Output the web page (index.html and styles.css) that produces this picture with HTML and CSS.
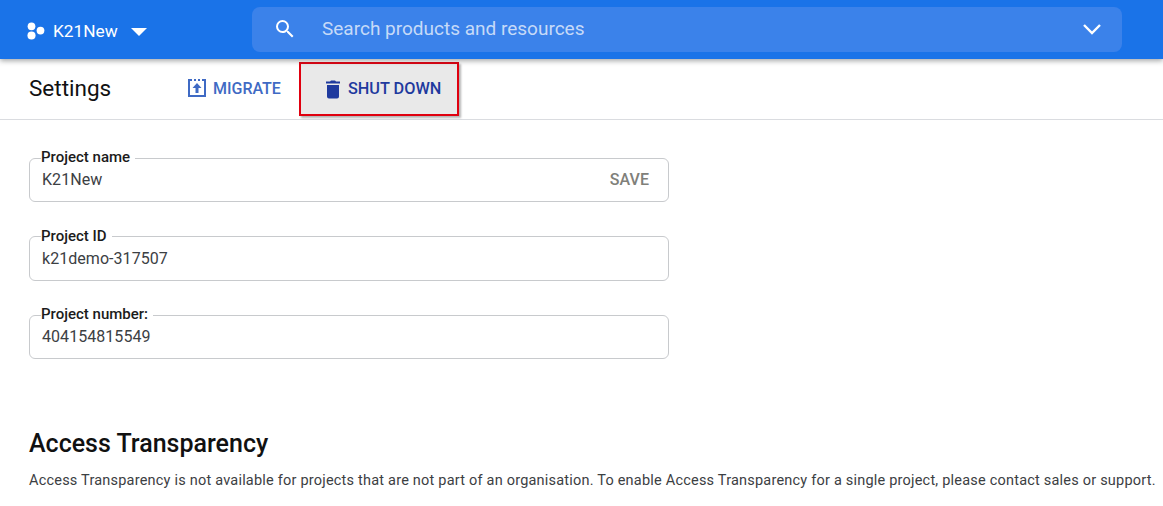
FILE: index.html
```html
<!DOCTYPE html>
<html lang="en">
<head>
<meta charset="utf-8">
<title>Settings</title>
<link rel="stylesheet" href="styles.css">
</head>
<body>
<header class="topbar">
  <div class="project-picker">
    <svg class="dots" width="20" height="20" viewBox="0 0 20 20"><circle cx="5" cy="4.800" r="4.300"/><circle cx="15" cy="9.500" r="4.300"/><circle cx="5" cy="15" r="4.500"/></svg>
    <span class="project-label">K21New</span>
    <span class="caret"></span>
  </div>
  <div class="search">
    <svg class="search-icon" width="24" height="24" viewBox="0 0 24 24"><path fill="#fff" d="M15.500 14h-.79l-.28-.27A6.470 6.470 0 0 0 16 9.500 6.500 6.500 0 1 0 9.500 16c1.610 0 3.090-.59 4.230-1.570l.27.28v.79l5 4.990L20.490 19l-4.990-5zm-6 0C7.010 14 5 11.990 5 9.500S7.010 5 9.500 5 14 7.010 14 9.500 11.990 14 9.500 14z"/></svg>
    <span class="search-text">Search products and resources</span>
    <svg class="chevron" width="20" height="12" viewBox="0 0 20 12"><path d="M2 2l8 8 8-8" fill="none" stroke="#fff" stroke-width="2.400"/></svg>
  </div>
</header>
<section class="toolbar">
  <h1 class="page-title">Settings</h1>
  <button class="action migrate">
    <svg width="20" height="20" viewBox="0 0 20 20"><path fill="none" stroke="#3f6ac4" stroke-width="2" d="M5 2H2v16h16V2h-3"/><path fill="#3f6ac4" d="M7 1h2v2H7zM11 1h2v2h-2zM10 5l4.500 5H11.500v5h-3v-5H5.500z"/></svg>
    <span>MIGRATE</span>
  </button>
  <button class="action shutdown">
    <svg width="16" height="20" viewBox="0 0 16 20"><path fill="#1f3a9e" d="M2 6h12v11.500a2 2 0 0 1-2 2H4a2 2 0 0 1-2-2zM1 2.500h4L6 1.500h4l1 1h4V4.500H1z"/></svg>
    <span>SHUT DOWN</span>
  </button>
</section>
<main class="content">
  <form class="fields">
    <fieldset class="field">
      <legend>Project name</legend>
      <div class="field-row"><span>K21New</span><span class="save">SAVE</span></div>
    </fieldset>
    <fieldset class="field">
      <legend>Project ID</legend>
      <div class="field-row"><span>k21demo-317507</span></div>
    </fieldset>
    <fieldset class="field">
      <legend>Project number:</legend>
      <div class="field-row"><span>404154815549</span></div>
    </fieldset>
  </form>
  <h2 class="section-title">Access Transparency</h2>
  <p class="section-text">Access Transparency is not available for projects that are not part of an organisation. To enable Access Transparency for a single project, please contact sales or support.</p>
</main>
</body>
</html>
```
FILE: styles.css
```css
* { box-sizing: border-box; }
html, body { margin: 0; height: 506px; overflow: hidden; }
body { background: #fff; font-family: Roboto, "Liberation Sans", sans-serif; color: #202124; }

.topbar {
  height: 59px;
  background: #1a73e8;
  display: flex;
  align-items: center;
  padding: 0 41px 0 27px;
  box-shadow: 0 2px 5px rgba(60, 64, 67, .45);
  position: relative;
}
.project-picker { width: 225px; display: flex; align-items: center; color: #fff; padding-top: 2px; }
.dots { fill: #fff; width: 18px; height: 18px; margin-right: 8px; }
.project-label { font-size: 17.300px; }
.caret { margin-left: 13px; margin-top: 3px; border: 8px solid transparent; border-top: 8px solid #fff; border-bottom: 0; }
.search {
  flex: 1;
  height: 45px;
  background: #3b82ea;
  border-radius: 8px;
  display: flex;
  align-items: center;
  padding: 0 20px 2px 21px;
}
.search-text { flex: 1; margin: 0 0 1px 25px; font-size: 19px; color: #c6daf8; }

.toolbar {
  height: 61px;
  display: flex;
  align-items: center;
  padding: 0 0 2px 29px;
  border-bottom: 1px solid #dadce0;
}
.page-title { margin: 0; width: 158px; font-size: 22.500px; font-weight: 400; color: #111; }
.action {
  display: flex;
  align-items: center;
  border: 0;
  background: none;
  padding: 0;
  font: 500 16px Roboto, sans-serif;
}
.migrate { color: #3f6ac4; gap: 6px; }
.shutdown {
  margin-left: 18px;
  width: 160px;
  height: 54px;
  padding-left: 24px;
  gap: 7px;
  color: #1f3a9e;
  background: #e9e9e9;
  border: 2px solid #e0000f;
  box-shadow: 2px 2px 2px #b5b5b5;
  font-size: 16.300px;
  margin-top: 1px;
}

.content { padding: 30px 0 0 29px; }
.fields { width: 640px; display: flex; flex-direction: column; gap: 26px; }
.field {
  margin: 0;
  padding: 0 11px;
  height: 52px;
  border: 1px solid #c8cacd;
  border-radius: 6px;
}
.field:nth-child(2) { height: 53px; }
.field:nth-child(2) .field-row { padding-top: 2px; }
.field:nth-child(2) legend { top: 0; }
.field:nth-child(3) .field-row { padding-top: 0; }
.field legend { padding: 0 5px 0 0; font-size: 15px; font-weight: 500; line-height: 16px; color: #1b1b1b; position: relative; top: -1px; }
.field-row { display: flex; justify-content: space-between; align-items: center; height: 26px; padding-left: 1px; font-size: 16px; letter-spacing: .05px; color: #3c4043; }
.save { font-weight: 500; font-size: 16px; color: #80807a; padding-right: 8px; }
.section-title { margin: 70px 0 0; font-size: 25px; font-weight: 500; line-height: 30px; color: #111; }
.section-text { margin: 12px 0 0; font-size: 14.500px; letter-spacing: .21px; line-height: 20px; white-space: nowrap; color: #3c4043; }
```
